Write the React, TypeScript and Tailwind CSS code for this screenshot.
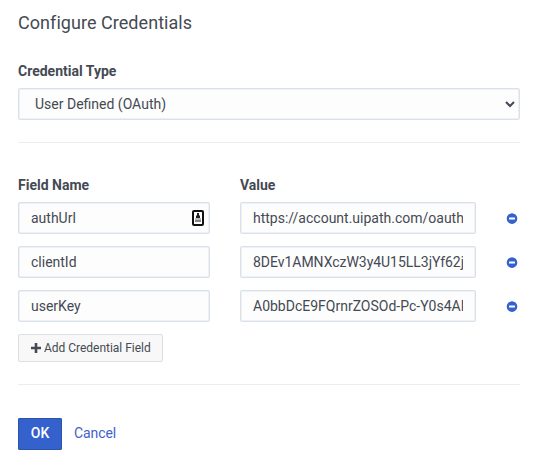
import React from "react";

const rows = [
  { name: "authUrl", value: "https://account.uipath.com/oauth", badge: true },
  { name: "clientId", value: "8DEv1AMNXczW3y4U15LL3jYf62j", badge: false },
  { name: "userKey", value: "A0bbDcE9FQrnrZOSOd-Pc-Y0s4AN", badge: false },
];

const box =
  "flex h-8 items-center rounded-[2px] border border-[#dae1e8] bg-[#fdfdfd] shadow-[inset_0_0_0_1px_#edf0f4]";

function PasswordBadge() {
  return (
    <svg width="12" height="16" viewBox="0 0 12 16" className="shrink-0">
      <rect x="1" y="1" width="10" height="14" rx="1" fill="#fff" stroke="#111" strokeWidth="2" />
      <path d="M5 3h2v2l1 1v2H4V6l1-1z" fill="#222" />
      <rect x="3" y="8" width="6" height="2" fill="#bbb" />
      <rect x="3" y="10" width="6" height="2" fill="#888" />
    </svg>
  );
}

function RemoveIcon() {
  return (
    <svg width="12" height="14" viewBox="0 0 12 14">
      <circle cx="6" cy="7.6" r="5.3" fill="#3461cc" />
      <rect x="3" y="6.6" width="6" height="2" rx="0.3" fill="#fff" />
    </svg>
  );
}

export default function App() {
  return (
    <main className="h-[466px] w-[546px] overflow-hidden bg-white pr-[26px] pl-[18px] font-['Roboto',sans-serif] text-sm leading-5 text-[#444a53]">
      <h1 className="pt-[11px] text-lg leading-6 tracking-[0.05px]">Configure Credentials</h1>
      <div className="mt-[26px] font-bold">Credential Type</div>
      <div className={`${box} mt-[7px] justify-between pr-[3px] pl-4`}>
        <span>User Defined (OAuth)</span>
        <svg width="12" height="12" viewBox="0 0 12 12" fill="none" stroke="#444a53" strokeWidth="2">
          <path d="M2 4l4 4 4-4" />
        </svg>
      </div>
      <hr className="mt-[22px] border-[#ebedef]" />
      <div className="mt-8 grid grid-cols-[192px_236px_1fr] gap-x-[30px] font-bold">
        <span>Field Name</span>
        <span>Value</span>
      </div>
      <div className="mt-[7px] flex flex-col gap-3">
        {rows.map((row) => (
          <div key={row.name} className="grid grid-cols-[192px_236px_1fr] items-center gap-x-[30px]">
            <div className={`${box} justify-between pr-[5px] pl-3`}>
              <span>{row.name}</span>
              {row.badge && <PasswordBadge />}
            </div>
            <div className={`${box} px-3`}>
              <span
                className={`w-full overflow-hidden whitespace-nowrap ${row.name === "clientId" ? "tracking-[-0.035px]" : ""}`}
              >
                {row.value}
              </span>
            </div>
            <RemoveIcon />
          </div>
        ))}
      </div>
      <button className="mt-3 flex h-7 w-[145px] items-center gap-[3px] rounded-[2px] border border-[#dcdee0] bg-[#f8f8f8] pl-3 text-xs tracking-[-0.02px] whitespace-nowrap">
        <svg width="10" height="10" viewBox="0 0 10 10" className="mb-px shrink-0" fill="#444a53">
          <path d="M3.7 0h2.6v3.7H10v2.6H6.3V10H3.7V6.3H0V3.7h3.7z" />
        </svg>
        Add Credential Field
      </button>
      <hr className="mt-[22px] border-[#ebedef]" />
      <div className="mt-[33px] flex items-center gap-3">
        <button className="flex h-8 w-11 items-center justify-center rounded-[1px] border border-[#2b52ad] bg-[#3461cc] pb-[2px] font-medium text-white">
          OK
        </button>
        <a className="pb-[2px] tracking-[-0.1px] text-[#4360cb]">Cancel</a>
      </div>
    </main>
  );
}
